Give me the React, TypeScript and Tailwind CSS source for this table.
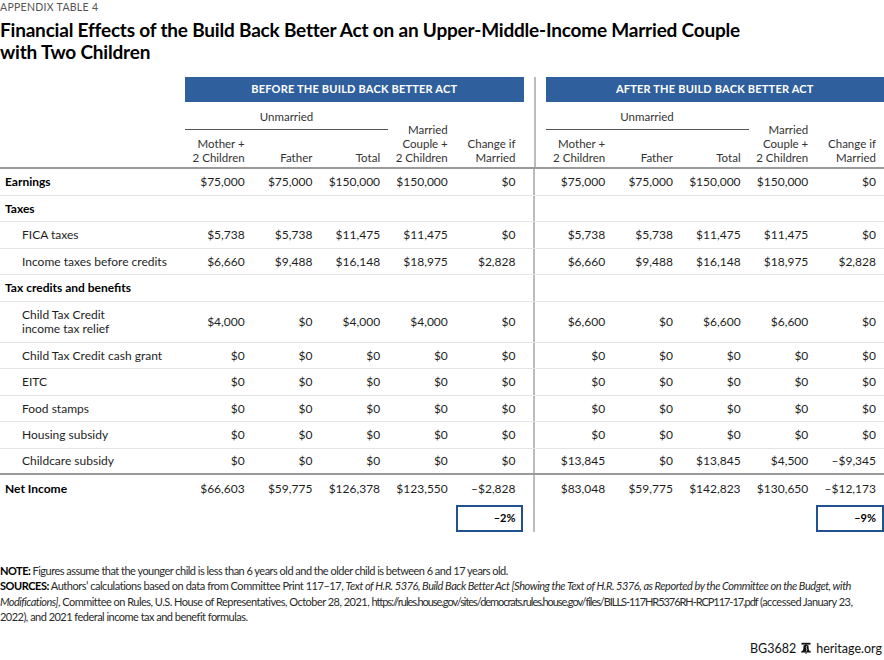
import React from 'react'

const grid =
  'grid grid-cols-[185px_repeat(5,minmax(0,1fr))_22px_repeat(5,minmax(0,1fr))]'

const zeros = ['$0', '$0', '$0', '$0', '$0']

type Row = {
  label: React.ReactNode
  kind: 'head' | 'item'
  before?: string[]
  after?: string[]
  tall?: boolean
  line: string
}

const rows: Row[] = [
  {
    label: 'Earnings',
    kind: 'head',
    before: ['$75,000', '$75,000', '$150,000', '$150,000', '$0'],
    after: ['$75,000', '$75,000', '$150,000', '$150,000', '$0'],
    line: 'border-b border-[#e4e4e4]',
  },
  { label: 'Taxes', kind: 'head', line: 'border-b border-[#e4e4e4]' },
  {
    label: 'FICA taxes',
    kind: 'item',
    before: ['$5,738', '$5,738', '$11,475', '$11,475', '$0'],
    after: ['$5,738', '$5,738', '$11,475', '$11,475', '$0'],
    line: 'border-b border-[#e4e4e4]',
  },
  {
    label: 'Income taxes before credits',
    kind: 'item',
    before: ['$6,660', '$9,488', '$16,148', '$18,975', '$2,828'],
    after: ['$6,660', '$9,488', '$16,148', '$18,975', '$2,828'],
    line: 'border-b border-[#e4e4e4]',
  },
  { label: 'Tax credits and benefits', kind: 'head', line: 'border-b border-[#e4e4e4]' },
  {
    label: (
      <>
        Child Tax Credit
        <br />
        income tax relief
      </>
    ),
    kind: 'item',
    tall: true,
    before: ['$4,000', '$0', '$4,000', '$4,000', '$0'],
    after: ['$6,600', '$0', '$6,600', '$6,600', '$0'],
    line: 'border-b border-[#e4e4e4]',
  },
  { label: 'Child Tax Credit cash grant', kind: 'item', before: zeros, after: zeros, line: 'border-b border-[#e4e4e4]' },
  { label: 'EITC', kind: 'item', before: zeros, after: zeros, line: 'border-b border-[#e4e4e4]' },
  { label: 'Food stamps', kind: 'item', before: zeros, after: zeros, line: 'border-b border-[#e4e4e4]' },
  { label: 'Housing subsidy', kind: 'item', before: zeros, after: zeros, line: 'border-b border-[#e4e4e4]' },
  {
    label: 'Childcare subsidy',
    kind: 'item',
    before: zeros,
    after: ['$13,845', '$0', '$13,845', '$4,500', '–$9,345'],
    line: 'border-b-2 border-[#9a9a9a]',
  },
  {
    label: 'Net Income',
    kind: 'head',
    before: ['$66,603', '$59,775', '$126,378', '$123,550', '–$2,828'],
    after: ['$83,048', '$59,775', '$142,823', '$130,650', '–$12,173'],
    line: '',
  },
]

function Divider() {
  return (
    <div className="flex justify-center">
      <div className="w-[2px] bg-[#bcbcbc]" />
    </div>
  )
}

function Cells({ values }: { values?: string[] }) {
  const list = values ?? ['', '', '', '', '']
  return (
    <>
      {list.map((v, i) => (
        <div key={i} className="flex items-center justify-end pr-[8px]">
          {v}
        </div>
      ))}
    </>
  )
}

function HeaderBlock({ title }: { title: string }) {
  return (
    <div className="col-span-5 flex flex-col">
      <div className="flex h-[25px] items-center justify-center bg-[#2f5f9d] text-[11px] font-bold tracking-[0.2px] text-white">
        {title}
      </div>
      <div className="grid grid-cols-5 grid-rows-[28px_37px] text-[11.5px] leading-[14px] text-[#333]">
        <div className="col-span-3 col-start-1 row-start-1 flex items-center justify-center border-b border-[#555] pt-[2px]">
          Unmarried
        </div>
        <div className="col-start-4 row-span-2 row-start-1 flex items-end justify-end pb-[2px] pr-[8px] text-right">
          Married
          <br />
          Couple +
          <br />2 Children
        </div>
        <div className="col-start-5 row-span-2 row-start-1 flex items-end justify-end pb-[2px] pr-[8px] text-right">
          Change if
          <br />
          Married
        </div>
        <div className="col-start-1 row-start-2 flex items-end justify-end pb-[2px] pr-[8px] text-right">
          Mother +
          <br />2 Children
        </div>
        <div className="col-start-2 row-start-2 flex items-end justify-end pb-[2px] pr-[8px] text-right">
          Father
        </div>
        <div className="col-start-3 row-start-2 flex items-end justify-end pb-[2px] pr-[8px] text-right">
          Total
        </div>
      </div>
    </div>
  )
}

function Bell() {
  return (
    <svg viewBox="0 0 12 12" className="mx-[4px] inline-block h-[12px] w-[12px] align-[-1px]">
      <rect x="1.5" y="0.8" width="9" height="1.8" fill="#111" />
      <rect x="5" y="2.4" width="2" height="1" fill="#111" />
      <path d="M3.6 3.3 Q6 2.6 8.4 3.3 L8.8 7.6 Q9.2 9 11 9.8 L11 10.6 L1 10.6 L1 9.8 Q2.8 9 3.2 7.6 Z" fill="#111" />
      <path d="M6.8 4 L6.1 5.8 L6.9 7.3 L6.2 9.4" stroke="#fff" strokeWidth="0.7" fill="none" />
      <rect x="5.2" y="10.6" width="1.6" height="1" fill="#111" />
    </svg>
  )
}

export default function App() {
  return (
    <div className="relative h-[660px] w-[884px] overflow-hidden bg-white font-['Lato',sans-serif] text-[#1e1e1e]">
      <div className="text-[10.5px] leading-[14px] tracking-[0.3px] text-[#555]">APPENDIX TABLE 4</div>
      <h1 className="mt-[5px] text-[19px] font-bold leading-[22px] tracking-[-0.2px] text-black">
        Financial Effects of the Build Back Better Act on an Upper-Middle-Income Married Couple
        <br />
        with Two Children
      </h1>

      <div className={`${grid} mt-[14px]`}>
        <div />
        <HeaderBlock title="BEFORE THE BUILD BACK BETTER ACT" />
        <Divider />
        <HeaderBlock title="AFTER THE BUILD BACK BETTER ACT" />
      </div>
      <div className="h-[2px] bg-[#9a9a9a]" />

      <div className="text-[12px] leading-[13.5px]">
        {rows.map((r, i) => (
          <div key={i} className={`${grid} ${r.tall ? 'h-[41px]' : 'h-[26.5px]'} ${r.line}`}>
            <div
              className={`flex items-center ${
                r.kind === 'item' ? 'pl-[22px]' : 'pl-[5px] font-bold text-black'
              }`}
            >
              <span>{r.label}</span>
            </div>
            <Cells values={r.before} />
            <Divider />
            <Cells values={r.after} />
          </div>
        ))}
        <div className={`${grid} h-[30px]`}>
          <div className="col-span-5" />
          <div className="mt-[3px] flex items-center justify-end border-2 border-[#21518f] pr-[6px] text-[11px] font-bold text-black">
            –2%
          </div>
          <Divider />
          <div className="col-span-4" />
          <div className="mt-[3px] flex items-center justify-end border-2 border-[#21518f] pr-[6px] text-[11px] font-bold text-black">
            –9%
          </div>
        </div>
      </div>

      <div className="mt-[31px] whitespace-nowrap text-[11px] leading-[15.5px] tracking-[-0.52px] text-[#2a2a2a]">
        <p>
          <b className="text-black">NOTE:</b> Figures assume that the younger child is less than 6 years old and the
          older child is between 6 and 17 years old.
        </p>
        <p className="tracking-[-0.46px]">
          <b className="text-black">SOURCES:</b> Authors’ calculations based on data from Committee Print 117–17,{' '}
          <i>
            Text of H.R. 5376, Build Back Better Act [Showing the Text of H.R. 5376, as Reported by the Committee on
            the Budget, with
          </i>
          <br />
          <span className="tracking-[-0.52px]">
            <i>Modifications]</i>, Committee on Rules, U.S. House of Representatives, October 28, 2021,{' '}
            <span className="tracking-[-1.05px]">
              https://rules.house.gov/sites/democrats.rules.house.gov/files/BILLS-117HR5376RH-RCP117-17.pdf
            </span>{' '}
            (accessed January 23,
          </span>
          <br />
          <span className="tracking-[-0.52px]">2022), and 2021 federal income tax and benefit formulas.</span>
        </p>
      </div>

      <div className="mt-[16px] pr-[2px] text-right text-[12.5px] leading-[16px] text-[#111]">
        BG3682
        <Bell />
        heritage.org
      </div>
    </div>
  )
}
